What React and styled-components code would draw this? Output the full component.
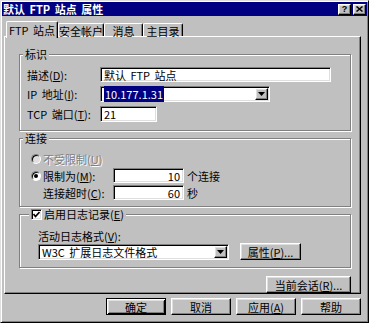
import React from "react";
import styled, { createGlobalStyle, css } from "styled-components";

const GlobalStyle = createGlobalStyle`
  * { box-sizing: border-box; }
  html, body { margin: 0; padding: 0; background: #c0c0c0; }
  body {
    font-family: "Noto Sans CJK SC", "Liberation Sans", sans-serif;
    font-size: 11px;
    word-spacing: 2px;
    color: #000;
  }
`;

const raised = css`
  background: #c0c0c0;
  border: 1px solid;
  border-color: #fff #000 #000 #fff;
  box-shadow: inset -1px -1px 0 #808080, inset 1px 1px 0 #dfdfdf;
`;

const sunken = css`
  border: 1px solid;
  border-color: #808080 #fff #fff #808080;
  box-shadow: inset 1px 1px 0 #000, inset -1px -1px 0 #dfdfdf;
`;

const Window = styled.div`
  width: 369px;
  height: 323px;
  display: flex;
  flex-direction: column;
  padding: 1px;
  background: #c0c0c0;
  border: 1px solid;
  border-color: #dfdfdf #000 #000 #dfdfdf;
  box-shadow: inset 1px 1px 0 #fff, inset -1px -1px 0 #808080;
`;

const TitleBar = styled.div`
  height: 14px;
  display: flex;
  align-items: center;
  justify-content: space-between;
  padding: 0 1px 0 1px;
  background: #000080;
  color: #fff;
  font-weight: bold;
  line-height: 14px;
  white-space: pre;
`;

const CaptionButtons = styled.div`
  display: flex;
  gap: 2px;
`;

const CaptionButton = styled.div`
  ${raised};
  width: 13px;
  height: 11px;
  display: flex;
  align-items: center;
  justify-content: center;
  color: #000;
  font: bold 9px/9px "Liberation Sans", sans-serif;
`;

const Body = styled.div`
  flex: 1;
  display: flex;
  flex-direction: column;
  padding: 5px 6px 0 2px;
`;

const TabStrip = styled.div`
  height: 15px;
  display: flex;
  align-items: flex-end;
  padding-left: 2px;
`;

const Tab = styled.div`
  position: relative;
  width: ${({ $w }) => $w}px;
  height: ${({ $active }) => ($active ? "17px" : "13px")};
  margin-bottom: ${({ $active }) => ($active ? "-2px" : "0")};
  z-index: ${({ $active }) => ($active ? 1 : 0)};
  padding-top: ${({ $active }) => ($active ? "2px" : "1px")};
  text-align: center;
  line-height: 12px;
  white-space: pre;
  background: #c0c0c0;
  border-top: 1px solid #fff;
  border-left: 1px solid #fff;
  border-right: 1px solid #000;
  border-radius: 2px 2px 0 0;
  box-shadow: inset -1px 0 0 #808080;
`;

const Panel = styled.div`
  height: 258px;
  display: flex;
  flex-direction: column;
  padding: 11px 9px 0 14px;
  background: #c0c0c0;
  border: 1px solid;
  border-color: #fff #000 #000 #fff;
  box-shadow: inset -1px -1px 0 #808080;
`;

const Group = styled.fieldset`
  margin: ${({ $mt = 0 }) => $mt}px 0 0 0;
  padding: 0;
  min-width: 0;
  border: 1px solid #808080;
  box-shadow: inset 1px 1px 0 #fff, 1px 1px 0 #fff;
`;

const Legend = styled.legend`
  display: flex;
  align-items: center;
  gap: 2px;
  height: 12px;
  margin-left: ${({ $ml = 3 }) => $ml}px;
  padding: 0 2px;
  line-height: 12px;
  background: #c0c0c0;
`;

const Key = styled.u`
  text-decoration: underline;
`;

const FieldGrid = styled.div`
  display: grid;
  grid-template-columns: 73px auto;
  grid-template-rows: 15px 16px 16px;
  row-gap: 4px;
  align-items: center;
  justify-items: start;
  padding: 7px 0 8px 7px;
`;

const Label = styled.span`
  line-height: 14px;
  white-space: pre;
  padding-left: ${({ $indent = 0 }) => $indent}px;
  ${({ $disabled }) =>
    $disabled &&
    css`
      color: #808080;
      text-shadow: 1px 1px 0 #fff;
    `}
`;

const Field = styled.div`
  ${sunken};
  width: ${({ $w }) => $w}px;
  height: ${({ $h = 16 }) => $h}px;
  display: flex;
  align-items: center;
  justify-content: ${({ $right }) => ($right ? "flex-end" : "flex-start")};
  padding: 0 3px;
  background: #fff;
  line-height: 12px;
  white-space: pre;
  overflow: hidden;
`;

const Combo = styled.div`
  ${sunken};
  width: ${({ $w }) => $w}px;
  height: 16px;
  display: flex;
  align-items: center;
  padding: 1px 1px 1px 2px;
  background: #fff;
  line-height: 12px;
  white-space: pre;
`;

const ComboText = styled.span`
  flex: 1;
  padding-left: 1px;
`;

const Selected = styled.span`
  background: #000080;
  color: #fff;
  padding: 0 1px;
`;

const DropButton = styled.div`
  ${raised};
  width: 13px;
  height: 100%;
  display: flex;
  align-items: center;
  justify-content: center;
`;

const ConnGrid = styled.div`
  display: grid;
  grid-template-columns: 79px 71px auto;
  grid-template-rows: 14px 15px 15px;
  column-gap: 3px;
  row-gap: 2px;
  align-items: center;
  padding: 8px 0 6px 11px;
`;

const Option = styled.div`
  display: flex;
  align-items: center;
  gap: 2px;
  grid-column: ${({ $span }) => ($span ? "1 / -1" : "auto")};
`;

const Radio = styled.span`
  width: 10px;
  height: 10px;
  display: flex;
  align-items: center;
  justify-content: center;
  border-radius: 50%;
  border: 1px solid;
  border-color: #808080 #fff #fff #808080;
  box-shadow: inset 1px 1px 0 #000;
  background: ${({ $disabled }) => ($disabled ? "#dfdfdf" : "#fff")};
`;

const Dot = styled.span`
  width: 4px;
  height: 4px;
  border-radius: 50%;
  background: #000;
`;

const Checkbox = styled.span`
  ${sunken};
  width: 11px;
  height: 11px;
  display: flex;
  align-items: center;
  justify-content: center;
  background: #fff;
`;

const LogBody = styled.div`
  display: flex;
  flex-direction: column;
  padding: 9px 0 7px 18px;
`;

const LogRow = styled.div`
  display: flex;
  align-items: center;
  gap: 11px;
`;

const Button = styled.div`
  ${raised};
  width: ${({ $w }) => $w}px;
  height: 17px;
  display: flex;
  align-items: center;
  justify-content: center;
  line-height: 12px;
  white-space: pre;
  ${({ $default }) =>
    $default &&
    css`
      border-color: #000;
      box-shadow: inset 1px 1px 0 #fff, inset -1px -1px 0 #000,
        inset 2px 2px 0 #dfdfdf, inset -2px -2px 0 #808080;
    `}
`;

const SessionButton = styled(Button)`
  align-self: flex-end;
  margin-top: 8px;
`;

const Footer = styled.div`
  display: flex;
  justify-content: flex-end;
  gap: 5px;
  margin-top: 4px;
`;

const Arrow = () => (
  <svg width="7" height="4" viewBox="0 0 7 4">
    <polygon points="0,0 7,0 3.5,4" fill="#000" />
  </svg>
);

const Check = () => (
  <svg width="7" height="7" viewBox="0 0 7 7">
    <polyline points="0.5,3 2.5,5.5 6.5,1" fill="none" stroke="#000" strokeWidth="1.6" />
  </svg>
);

const Close = () => (
  <svg width="7" height="6" viewBox="0 0 7 6">
    <path d="M0.5 0.5 L6.5 5.5 M6.5 0.5 L0.5 5.5" stroke="#000" strokeWidth="1.5" />
  </svg>
);

const tabs = [
  { name: "FTP 站点", w: 52, active: true },
  { name: "安全帐户", w: 46 },
  { name: "消息", w: 39 },
  { name: "主目录", w: 40 },
];

export default function App() {
  return (
    <>
      <GlobalStyle />
      <Window>
        <TitleBar>
          <span>默认 FTP 站点 属性</span>
          <CaptionButtons>
            <CaptionButton>?</CaptionButton>
            <CaptionButton>
              <Close />
            </CaptionButton>
          </CaptionButtons>
        </TitleBar>
        <Body>
          <TabStrip>
            {tabs.map((t) => (
              <Tab key={t.name} $w={t.w} $active={t.active}>
                {t.name}
              </Tab>
            ))}
          </TabStrip>
          <Panel>
            <Group>
              <Legend>标识</Legend>
              <FieldGrid>
                <Label>
                  描述(<Key>D</Key>):
                </Label>
                <Field $w={231} $h={15}>默认 FTP 站点</Field>
                <Label>
                  IP 地址(<Key>I</Key>):
                </Label>
                <Combo $w={170}>
                  <ComboText>
                    <Selected>10.177.1.31</Selected>
                  </ComboText>
                  <DropButton>
                    <Arrow />
                  </DropButton>
                </Combo>
                <Label>
                  TCP 端口(<Key>T</Key>):
                </Label>
                <Field $w={57}>21</Field>
              </FieldGrid>
            </Group>

            <Group $mt={1}>
              <Legend>连接</Legend>
              <ConnGrid>
                <Option $span>
                  <Radio $disabled />
                  <Label $disabled>
                    不受限制(<Key>U</Key>)
                  </Label>
                </Option>
                <Option>
                  <Radio>
                    <Dot />
                  </Radio>
                  <Label>
                    限制为(<Key>M</Key>):
                  </Label>
                </Option>
                <Field $w={71} $h={15} $right>
                  10
                </Field>
                <Label>个连接</Label>
                <Label $indent={12}>
                  连接超时(<Key>C</Key>):
                </Label>
                <Field $w={71} $h={15} $right>
                  60
                </Field>
                <Label>秒</Label>
              </ConnGrid>
            </Group>

            <Group $mt={1}>
              <Legend $ml={9}>
                <Checkbox>
                  <Check />
                </Checkbox>
                <Label>
                  启用日志记录(<Key>E</Key>)
                </Label>
              </Legend>
              <LogBody>
                <Label>
                  活动日志格式(<Key>V</Key>):
                </Label>
                <LogRow>
                  <Combo $w={191}>
                    <ComboText>W3C 扩展日志文件格式</ComboText>
                    <DropButton>
                      <Arrow />
                    </DropButton>
                  </Combo>
                  <Button $w={61}>
                    属性(<Key>P</Key>)...
                  </Button>
                </LogRow>
              </LogBody>
            </Group>

            <SessionButton $w={85}>
              当前会话(<Key>R</Key>)...
            </SessionButton>
          </Panel>
          <Footer>
            <Button $w={60} $default>
              确定
            </Button>
            <Button $w={60}>取消</Button>
            <Button $w={60}>
              应用(<Key>A</Key>)
            </Button>
            <Button $w={60}>帮助</Button>
          </Footer>
        </Body>
      </Window>
    </>
  );
}
